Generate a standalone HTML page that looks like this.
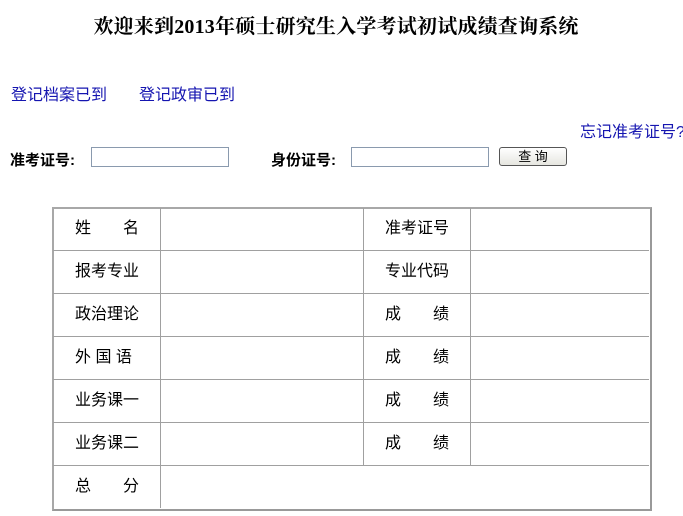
<!DOCTYPE html>
<html><head><meta charset="utf-8"><style>
body{margin:0;width:683px;height:516px;background:#fff;position:relative;overflow:hidden;font-family:"Liberation Sans","Noto Sans CJK SC",sans-serif;font-size:16px;color:#000}
.a{position:absolute;white-space:nowrap}
.t{font-family:"Liberation Serif","Noto Serif CJK SC",serif;font-weight:bold;font-size:20px;letter-spacing:0.2px;left:0;width:672px;text-align:center;top:10px}
.l{color:#1515b0}
.b{font-weight:bold;font-size:15px}
.in{position:absolute;border:1px solid #8a9aae;background:#fff;height:18px}
.h{position:absolute;height:1px;background:#a0a0a0}
.v{position:absolute;width:1px;background:#a0a0a0}
.c{position:absolute;line-height:43px;height:43px}
</style></head><body>
<div class="a t">欢迎来到2013年硕士研究生入学考试初试成绩查询系统</div>
<div class="a l" style="left:11px;top:81px">登记档案已到</div>
<div class="a l" style="left:139px;top:81px">登记政审已到</div>
<div class="a l" style="left:580px;top:118px">忘记准考证号?</div>
<div class="a b" style="left:10px;top:149px">准考证号:</div>
<div class="in" style="left:91px;top:147px;width:136px"></div>
<div class="a b" style="left:271px;top:149px">身份证号:</div>
<div class="in" style="left:351px;top:147px;width:136px"></div>
<div class="a" style="left:499px;top:147px;width:66px;height:17px;border:1px solid #555;border-radius:3px;background:linear-gradient(#fff,#e6e6e0);font-size:13px;text-align:center;line-height:17px">查 询</div>

<div style="position:absolute;left:52px;top:207px;width:596px;height:300px;border:2px solid #a8a8a8;border-right-color:#999;border-bottom-color:#999"></div>
<div class="h" style="left:53px;width:596px;top:250px"></div>
<div class="h" style="left:53px;width:596px;top:293px"></div>
<div class="h" style="left:53px;width:596px;top:336px"></div>
<div class="h" style="left:53px;width:596px;top:379px"></div>
<div class="h" style="left:53px;width:596px;top:422px"></div>
<div class="h" style="left:53px;width:596px;top:465px"></div>
<div class="v" style="left:160px;top:208px;height:300px"></div>
<div class="v" style="left:363px;top:208px;height:257px"></div>
<div class="v" style="left:470px;top:208px;height:257px"></div>

<div class="c" style="left:75px;top:207px">姓</div><div class="c" style="left:123px;top:207px">名</div>
<div class="c" style="left:75px;top:250px">报考专业</div>
<div class="c" style="left:75px;top:293px">政治理论</div>
<div class="c" style="left:75px;top:336px">外 国 语</div>
<div class="c" style="left:75px;top:379px">业务课一</div>
<div class="c" style="left:75px;top:422px">业务课二</div>
<div class="c" style="left:75px;top:465px">总</div><div class="c" style="left:123px;top:465px">分</div>
<div class="c" style="left:385px;top:207px">准考证号</div>
<div class="c" style="left:385px;top:250px">专业代码</div>
<div class="c" style="left:385px;top:293px">成</div><div class="c" style="left:433px;top:293px">绩</div>
<div class="c" style="left:385px;top:336px">成</div><div class="c" style="left:433px;top:336px">绩</div>
<div class="c" style="left:385px;top:379px">成</div><div class="c" style="left:433px;top:379px">绩</div>
<div class="c" style="left:385px;top:422px">成</div><div class="c" style="left:433px;top:422px">绩</div>
</body></html>
